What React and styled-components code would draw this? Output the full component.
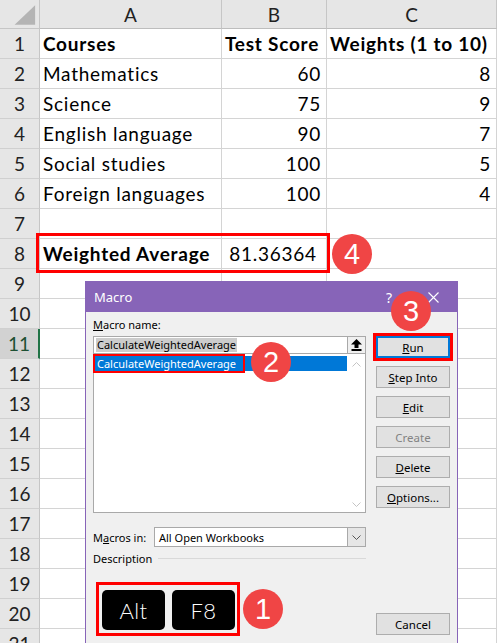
import React from "react";
import styled, { createGlobalStyle } from "styled-components";

const GlobalStyle = createGlobalStyle`
  html, body {
    margin: 0;
    padding: 0;
    background: #fff;
    overflow: hidden;
  }
  body {
    font-family: "Lato", "Liberation Sans", sans-serif;
  }
`;

const rows = [
  { a: "Courses", b: "Test Score", c: "Weights (1 to 10)", bold: true },
  { a: "Mathematics", b: 60, c: 8 },
  { a: "Science", b: 75, c: 9 },
  { a: "English language", b: 90, c: 7 },
  { a: "Social studies", b: 100, c: 5 },
  { a: "Foreign languages", b: 100, c: 4 },
  {},
  { total: true },
  {},
  {},
  {},
  {},
  {},
  {},
  {},
  {},
  {},
  {},
  {},
  {},
  {},
];

const buttons = [
  { u: "R", rest: "un", main: true },
  { u: "S", rest: "tep Into" },
  { u: "E", rest: "dit" },
  { pre: "Create", disabled: true },
  { u: "D", rest: "elete" },
  { u: "O", rest: "ptions..." },
];

const Page = styled.div`
  position: relative;
  width: 497px;
  height: 643px;
  overflow: hidden;
`;

const Sheet = styled.div`
  display: flex;
  flex-direction: column;
`;

const Row = styled.div`
  display: flex;
  height: ${(p) => p.$h || 30}px;
  flex: none;
`;

const Corner = styled.div`
  width: 40px;
  flex: none;
  box-sizing: border-box;
  background: #e6e6e6;
  border-right: 1px solid #c6c6c6;
  border-bottom: 1px solid #c6c6c6;
  display: flex;
`;

const ColHead = styled.div`
  width: ${(p) => (p.$w ? `${p.$w}px` : "auto")};
  flex: ${(p) => (p.$w ? "none" : 1)};
  box-sizing: border-box;
  background: #e6e6e6;
  border-right: 1px solid #c6c6c6;
  border-bottom: 1px solid #bdbdbd;
  display: flex;
  align-items: center;
  justify-content: center;
  font-size: 19px;
  color: #222;
`;

const RowHead = styled.div`
  width: 40px;
  flex: none;
  box-sizing: border-box;
  background: ${(p) => (p.$active ? "#d2d2d2" : "#e6e6e6")};
  border-right: ${(p) => (p.$active ? "2px solid #217346" : "1px solid #c6c6c6")};
  border-bottom: 1px solid #d0d0d0;
  display: flex;
  align-items: center;
  justify-content: center;
  font-size: 19px;
  color: ${(p) => (p.$active ? "#1d4f31" : "#222")};
`;

const Cell = styled.div`
  width: ${(p) => (p.$w ? `${p.$w}px` : "auto")};
  flex: ${(p) => (p.$w ? "none" : 1)};
  box-sizing: border-box;
  border-right: 1px solid #d4d4d4;
  border-bottom: 1px solid #d4d4d4;
  display: flex;
  align-items: center;
  justify-content: ${(p) =>
    p.$align === "right" ? "flex-end" : p.$align === "center" ? "center" : "flex-start"};
  padding: 0 5px 0 3px;
  font-size: 19px;
  letter-spacing: 0.75px;
  font-weight: ${(p) => (p.$bold ? 700 : 400)};
  color: #000;
  white-space: nowrap;
`;

const Highlight = styled.div`
  display: flex;
  position: relative;

  &::after {
    content: "";
    position: absolute;
    top: -6px;
    bottom: -4px;
    left: -4px;
    right: -3px;
    border: 3px solid #f00;
    pointer-events: none;
  }
`;

const Badge = styled.div`
  position: absolute;
  left: ${(p) => p.$x - 20}px;
  top: ${(p) => p.$y - 20}px;
  width: 40px;
  height: 40px;
  border-radius: 50%;
  background: #f04545;
  color: #fff;
  font-family: "Liberation Sans", Arial, sans-serif;
  font-size: 29px;
  display: flex;
  align-items: center;
  justify-content: center;
  z-index: 5;
`;

const Dialog = styled.div`
  position: absolute;
  left: 85px;
  top: 281px;
  width: 373px;
  height: 380px;
  box-sizing: border-box;
  border: 1px solid #8764b8;
  background: #f0f0f0;
  font-family: "Noto Sans", "Open Sans", sans-serif;
  font-size: 11px;
  color: #000;
  display: flex;
  flex-direction: column;
`;

const TitleBar = styled.div`
  height: 30px;
  flex: none;
  background: #8764b8;
  color: #fff;
  display: flex;
  align-items: center;
  padding: 0 18px 0 8px;
  font-size: 13px;
`;

const TitleText = styled.span`
  flex: 1;
`;

const TitleHelp = styled.span`
  font-size: 14px;
  margin-right: 36px;
`;

const Body = styled.div`
  display: flex;
  justify-content: space-between;
  padding: 6px 7px 0 7px;
`;

const LeftCol = styled.div`
  width: 273px;
  display: flex;
  flex-direction: column;
`;

const RightCol = styled.div`
  width: 74px;
  padding-top: 18px;
  display: flex;
  flex-direction: column;
  gap: 8px;
`;

const Label = styled.div`
  height: 14px;
  line-height: 14px;
  margin-bottom: ${(p) => p.$mb || 0}px;
  white-space: nowrap;
`;

const InputRow = styled.div`
  display: flex;
  height: 18px;
`;

const InputBox = styled.div`
  flex: 1;
  box-sizing: border-box;
  background: #fff;
  border: 1px solid #a9a9a9;
  border-right: none;
  display: flex;
  align-items: center;
  padding-left: 2px;
`;

const Selected = styled.span`
  background: #cccccc;
  line-height: 14px;
  padding: 0 1px;
`;

const UpButton = styled.div`
  width: 19px;
  box-sizing: border-box;
  background: #f0f0f0;
  border: 1px solid #a9a9a9;
  display: flex;
  align-items: center;
  justify-content: center;
`;

const ListBox = styled.div`
  height: 159px;
  box-sizing: border-box;
  background: #fff;
  border: 1px solid #a9a9a9;
  border-top: none;
  display: flex;
  padding: 2px 0 1px 1px;
`;

const ListItems = styled.div`
  flex: 1;
`;

const ListItem = styled.div`
  height: 15px;
  background: #0078d7;
  color: #fff;
  display: flex;
  align-items: center;
`;

const Marked = styled.span`
  line-height: 15px;
  padding: 0 7px 0 2px;
  outline: 2px solid #f00;
  outline-offset: 0;
`;

const ScrollBar = styled.div`
  width: 18px;
  display: flex;
  flex-direction: column;
  justify-content: space-between;
  align-items: center;
  padding: 6px 0 4px;
`;

const ComboRow = styled.div`
  display: flex;
  align-items: center;
  margin-top: 14px;
  height: 20px;
`;

const ComboLabel = styled.div`
  width: 61px;
  flex: none;
`;

const Combo = styled.div`
  flex: 1;
  height: 20px;
  box-sizing: border-box;
  background: #fff;
  border: 1px solid #a9a9a9;
  display: flex;
  align-items: center;
  padding-left: 4px;
`;

const ComboText = styled.span`
  flex: 1;
`;

const ComboArrow = styled.div`
  width: 18px;
  height: 100%;
  box-sizing: border-box;
  background: #e6e6e6;
  border-left: 1px solid #a9a9a9;
  display: flex;
  align-items: center;
  justify-content: center;
`;

const GroupRow = styled.div`
  display: flex;
  align-items: center;
  margin-top: 4px;
  height: 14px;
`;

const GroupLine = styled.div`
  flex: 1;
  height: 1px;
  background: #d9d9d9;
  margin-left: 6px;
`;

const KeysBox = styled.div`
  align-self: flex-start;
  margin: 17px 0 0 3px;
  border: 3px solid #f00;
  padding: 5px 2px 3px 3px;
  display: flex;
  gap: 7px;
`;

const Key = styled.div`
  width: 63px;
  height: 40px;
  border-radius: 5px;
  background: #000;
  color: #fff;
  font-family: "Lato", sans-serif;
  font-weight: 300;
  font-size: 22px;
  letter-spacing: 0.5px;
  display: flex;
  align-items: center;
  justify-content: center;
`;

const Button = styled.div`
  height: 22px;
  box-sizing: border-box;
  background: #e1e1e1;
  border: 1px solid ${(p) => (p.$main ? "#0078d7" : "#adadad")};
  box-shadow: ${(p) => (p.$main ? "inset 0 0 0 1px #0078d7" : "none")};
  outline: ${(p) => (p.$main ? "3px solid #f00" : "none")};
  outline-offset: 0;
  margin-top: ${(p) => p.$mt || 0}px;
  color: ${(p) => (p.$disabled ? "#838383" : "#000")};
  display: flex;
  align-items: center;
  justify-content: center;
  font-size: 11.5px;
  white-space: nowrap;
`;

const Chevron = ({ up, color = "#c4c4c4" }) => (
  <svg width="9" height="5" viewBox="0 0 9 5">
    <polyline
      points={up ? "0.5,4.5 4.5,0.5 8.5,4.5" : "0.5,0.5 4.5,4.5 8.5,0.5"}
      fill="none"
      stroke={color}
      strokeWidth="1"
    />
  </svg>
);

const UpArrowIcon = () => (
  <svg width="11" height="12" viewBox="0 0 11 12">
    <polygon points="5.5,0 11,5.5 7.5,5.5 7.5,9 3.5,9 3.5,5.5 0,5.5" fill="#000" />
    <rect x="0.5" y="10" width="10" height="2" fill="#000" />
  </svg>
);

const CloseIcon = () => (
  <svg width="11" height="11" viewBox="0 0 11 11">
    <path d="M0.5 0.5 L10.5 10.5 M10.5 0.5 L0.5 10.5" stroke="#fff" strokeWidth="1.1" />
  </svg>
);

const CornerIcon = () => (
  <svg width="40" height="28" viewBox="0 0 40 28">
    <polygon points="15,25 36,25 36,5" fill="#b4b4b4" />
  </svg>
);

const App = () => {
  return (
    <Page>
      <GlobalStyle />
      <Sheet>
        <Row $h={29}>
          <Corner>
            <CornerIcon />
          </Corner>
          <ColHead $w={182}>A</ColHead>
          <ColHead $w={105}>B</ColHead>
          <ColHead>C</ColHead>
        </Row>
        {rows.map((r, i) => (
          <Row key={i}>
            <RowHead $active={i + 1 === 11}>{i + 1}</RowHead>
            {r.total ? (
              <Highlight>
                <Cell $w={182} $bold>
                  Weighted Average
                </Cell>
                <Cell $w={105} $align="center">
                  81.36364
                </Cell>
              </Highlight>
            ) : (
              <>
                <Cell $w={182} $bold={r.bold}>
                  {r.a}
                </Cell>
                <Cell $w={105} $bold={r.bold} $align={r.bold ? "left" : "right"}>
                  {r.b}
                </Cell>
              </>
            )}
            <Cell $bold={r.bold} $align={r.bold ? "left" : "right"}>
              {r.c}
            </Cell>
          </Row>
        ))}
      </Sheet>

      <Dialog>
        <TitleBar>
          <TitleText>Macro</TitleText>
          <TitleHelp>?</TitleHelp>
          <CloseIcon />
        </TitleBar>
        <Body>
          <LeftCol>
            <Label $mb={4}>
              <u>M</u>acro name:
            </Label>
            <InputRow>
              <InputBox>
                <Selected>CalculateWeightedAverage</Selected>
              </InputBox>
              <UpButton>
                <UpArrowIcon />
              </UpButton>
            </InputRow>
            <ListBox>
              <ListItems>
                <ListItem>
                  <Marked>CalculateWeightedAverage</Marked>
                </ListItem>
              </ListItems>
              <ScrollBar>
                <Chevron up />
                <Chevron />
              </ScrollBar>
            </ListBox>
            <ComboRow>
              <ComboLabel>
                M<u>a</u>cros in:
              </ComboLabel>
              <Combo>
                <ComboText>All Open Workbooks</ComboText>
                <ComboArrow>
                  <Chevron color="#555" />
                </ComboArrow>
              </Combo>
            </ComboRow>
            <GroupRow>
              Description
              <GroupLine />
            </GroupRow>
            <KeysBox>
              <Key>Alt</Key>
              <Key>F8</Key>
            </KeysBox>
          </LeftCol>
          <RightCol>
            {buttons.map((b, i) => (
              <Button key={i} $main={b.main} $disabled={b.disabled}>
                {b.pre}
                {b.u && <u>{b.u}</u>}
                {b.rest}
              </Button>
            ))}
            <Button $mt={97}>Cancel</Button>
          </RightCol>
        </Body>
      </Dialog>

      <Badge $x={352} $y={254}>4</Badge>
      <Badge $x={411} $y={311}>3</Badge>
      <Badge $x={271} $y={362}>2</Badge>
      <Badge $x={263} $y={609}>1</Badge>
    </Page>
  );
};

export default App;
